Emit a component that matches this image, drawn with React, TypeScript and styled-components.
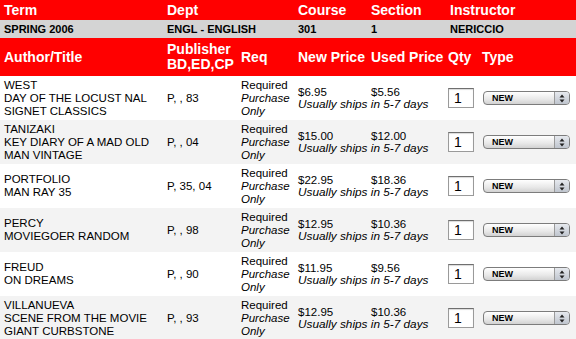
import React from 'react'
import styled, { createGlobalStyle } from 'styled-components'

const GlobalStyle = createGlobalStyle`
  html, body {
    margin: 0;
    padding: 0;
    background: #ffffff;
  }
  body {
    font-family: "Liberation Sans", Arial, Helvetica, sans-serif;
    color: #000000;
  }
`

const Color = {
  red: '#ff0000',
  info: '#d4d4d4',
  stripe: '#f3f3f3',
  white: '#ffffff'
}

const COLUMNS = '163px 74px 57px 73px 77px 34px 98px'

const Table = styled.div`
  width: 576px;
  display: flex;
  flex-direction: column;
`

const Row = styled.div<{ $bg: string; $height: number }>`
  display: grid;
  grid-template-columns: ${COLUMNS};
  height: ${props => props.$height}px;
  background: ${props => props.$bg};
  align-items: center;
`

const HeadCell = styled.div<{ $span?: number; $pad?: number }>`
  grid-column: span ${props => props.$span || 1};
  padding-left: ${props => props.$pad ?? 4}px;
  color: ${Color.white};
  font-weight: bold;
  font-size: 14px;
  line-height: 15px;
  white-space: nowrap;
`

const InfoCell = styled.div<{ $span?: number; $pad?: number }>`
  grid-column: span ${props => props.$span || 1};
  padding-left: ${props => props.$pad ?? 4}px;
  font-weight: bold;
  font-size: 11px;
  line-height: 13px;
`

const Cell = styled.div<{ $span?: number }>`
  grid-column: span ${props => props.$span || 1};
  padding-left: 4px;
  font-size: 11.5px;
  line-height: 13px;
  white-space: nowrap;
`

const Italic = styled.span`
  font-style: italic;
`

const PriceBlock = styled.div`
  grid-column: span 2;
  display: grid;
  grid-template-columns: 73px 77px;
  padding-left: 4px;
  font-size: 11.5px;
  line-height: 12px;
`

const Ships = styled.div`
  grid-column: span 2;
  font-style: italic;
  font-size: 11.8px;
  line-height: 13px;
  white-space: nowrap;
`

const QtyBox = styled.div`
  margin-left: 4px;
  width: 26px;
  height: 20px;
  box-sizing: border-box;
  border: 1px solid #9a9a9a;
  border-top-color: #6f6f6f;
  background: #ffffff;
  box-shadow: inset 0 1px 1px rgba(0, 0, 0, 0.15);
  font-size: 14px;
  line-height: 18px;
  padding-left: 5px;
`

const TypeSelect = styled.div`
  margin-left: 5px;
  width: 87px;
  height: 14px;
  box-sizing: border-box;
  border: 1px solid #7c7c7c;
  border-radius: 4px;
  background: linear-gradient(#ffffff, #e8e8e8 60%, #d2d2d2);
  display: flex;
  align-items: center;
  overflow: hidden;
`

const SelectText = styled.span`
  flex: 1;
  padding-left: 8px;
  font-size: 9px;
  font-weight: bold;
  line-height: 12px;
`

const SelectArrow = styled.span`
  width: 14px;
  height: 100%;
  border-left: 1px solid #9a9a9a;
  background: linear-gradient(#e6e9ee, #bfc5ce);
  display: flex;
  align-items: center;
  justify-content: center;
`

type Book = {
  lines: string[]
  pub: string
  newPrice: string
  usedPrice: string
}

const books: Book[] = [
  { lines: ['WEST', 'DAY OF THE LOCUST NAL', 'SIGNET CLASSICS'], pub: 'P, , 83', newPrice: '$6.95', usedPrice: '$5.56' },
  { lines: ['TANIZAKI', 'KEY DIARY OF A MAD OLD', 'MAN VINTAGE'], pub: 'P, , 04', newPrice: '$15.00', usedPrice: '$12.00' },
  { lines: ['PORTFOLIO', 'MAN RAY 35'], pub: 'P, 35, 04', newPrice: '$22.95', usedPrice: '$18.36' },
  { lines: ['PERCY', 'MOVIEGOER RANDOM'], pub: 'P, , 98', newPrice: '$12.95', usedPrice: '$10.36' },
  { lines: ['FREUD', 'ON DREAMS'], pub: 'P, , 90', newPrice: '$11.95', usedPrice: '$9.56' },
  { lines: ['VILLANUEVA', 'SCENE FROM THE MOVIE', 'GIANT CURBSTONE'], pub: 'P, , 93', newPrice: '$12.95', usedPrice: '$10.36' }
]

const Arrows = () => (
  <svg width="6" height="9" viewBox="0 0 6 9">
    <path d="M3 0.5 L5.5 3.5 L0.5 3.5 Z" fill="#222" />
    <path d="M3 8.5 L5.5 5.5 L0.5 5.5 Z" fill="#222" />
  </svg>
)

const BookRow = ({ book, striped }: { book: Book; striped: boolean }) => (
  <Row $bg={striped ? Color.stripe : Color.white} $height={44}>
    <Cell>
      {book.lines.map(line => (
        <div key={line}>{line}</div>
      ))}
    </Cell>
    <Cell>{book.pub}</Cell>
    <Cell>
      Required
      <br />
      <Italic>Purchase</Italic>
      <br />
      <Italic>Only</Italic>
    </Cell>
    <PriceBlock>
      <span>{book.newPrice}</span>
      <span>{book.usedPrice}</span>
      <Ships>Usually ships in 5-7 days</Ships>
    </PriceBlock>
    <div>
      <QtyBox>1</QtyBox>
    </div>
    <div>
      <TypeSelect>
        <SelectText>NEW</SelectText>
        <SelectArrow>
          <Arrows />
        </SelectArrow>
      </TypeSelect>
    </div>
  </Row>
)

export default function App() {
  return (
    <>
      <GlobalStyle />
      <Table>
        <Row $bg={Color.red} $height={20}>
          <HeadCell>Term</HeadCell>
          <HeadCell $span={2}>Dept</HeadCell>
          <HeadCell>Course</HeadCell>
          <HeadCell>Section</HeadCell>
          <HeadCell $span={2} $pad={6}>Instructor</HeadCell>
        </Row>
        <Row $bg={Color.info} $height={18}>
          <InfoCell>SPRING 2006</InfoCell>
          <InfoCell $span={2}>ENGL - ENGLISH</InfoCell>
          <InfoCell>301</InfoCell>
          <InfoCell>1</InfoCell>
          <InfoCell $span={2} $pad={6}>NERICCIO</InfoCell>
        </Row>
        <Row $bg={Color.red} $height={38}>
          <HeadCell>Author/Title</HeadCell>
          <HeadCell>
            Publisher
            <br />
            BD,ED,CP
          </HeadCell>
          <HeadCell>Req</HeadCell>
          <HeadCell>New Price</HeadCell>
          <HeadCell>Used Price</HeadCell>
          <HeadCell>Qty</HeadCell>
          <HeadCell>Type</HeadCell>
        </Row>
        {books.map((book, i) => (
          <BookRow key={book.lines[0]} book={book} striped={i % 2 === 1} />
        ))}
      </Table>
    </>
  )
}
